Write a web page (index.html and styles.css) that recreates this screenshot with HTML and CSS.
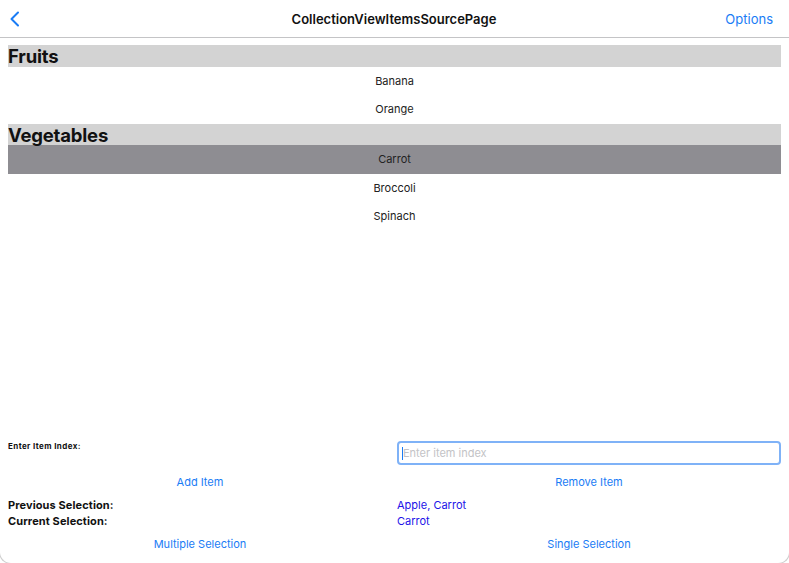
FILE: index.html
```html
<!DOCTYPE html>
<html>
<head>
<meta charset="utf-8">
<link rel="stylesheet" href="styles.css">
</head>
<body>
<div class="app">
  <header class="nav">
    <div class="nav-left">
      <svg class="back" width="12" height="16" viewBox="0 0 12 16"><path d="M9 1.5 L2.5 8 L9 14.5" fill="none" stroke="#1a7cf5" stroke-width="2" stroke-linecap="round" stroke-linejoin="round"/></svg>
    </div>
    <div class="nav-title">CollectionViewItemsSourcePage</div>
    <div class="nav-right">Options</div>
  </header>
  <main class="list">
    <div class="group-header">Fruits</div>
    <div class="item">Banana</div>
    <div class="item">Orange</div>
    <div class="group-header">Vegetables</div>
    <div class="item selected">Carrot</div>
    <div class="item">Broccoli</div>
    <div class="item">Spinach</div>
  </main>
  <section class="panel">
    <div class="label-small">Enter Item Index:</div>
    <div class="entry"><span class="caret"></span><span class="placeholder">Enter item index</span></div>
    <div class="btn btn-row">Add Item</div>
    <div class="btn btn-row">Remove Item</div>
    <div class="label">Previous Selection:</div>
    <div class="value">Apple, Carrot</div>
    <div class="label">Current Selection:</div>
    <div class="value">Carrot</div>
    <div class="btn">Multiple Selection</div>
    <div class="btn">Single Selection</div>
  </section>
  <div class="corner corner-l"></div>
  <div class="corner corner-r"></div>
</div>
</body>
</html>
```
FILE: styles.css
```css
* { box-sizing: border-box; }
html, body { margin: 0; padding: 0; background: #fff; }
body { font-family: Inter, "Noto Sans", "Liberation Sans", sans-serif; color: #1c1c1e; }
.app {
  position: relative;
  width: 789px;
  height: 563px;
  display: flex;
  flex-direction: column;
  overflow: hidden;
}
.nav {
  height: 38px;
  flex: none;
  display: grid;
  grid-template-columns: 1fr auto 1fr;
  align-items: center;
  border-bottom: 1px solid #c4c4c6;
  padding: 0 16px 0 9px;
}
.nav-left { display: flex; align-items: center; }
.back { display: block; }
.nav-title { font-size: 13px; font-weight: 600; color: #111; letter-spacing: 0; padding-left: 6px; }
.nav-right { justify-self: end; font-size: 13px; color: #1a7cf5; }
.list {
  flex: 1;
  padding: 7px 8px 0 8px;
}
.group-header {
  background: #d3d3d3;
  height: 21.5px;
  font-size: 18.5px;
  font-weight: 700;
  line-height: 22px;
  color: #111;
  letter-spacing: -0.2px;
}
.item {
  height: 28.5px;
  display: flex;
  align-items: center;
  justify-content: center;
  font-size: 11px;
  color: #222;
}
.item.selected { background: #8e8d92; }
.panel {
  flex: none;
  display: grid;
  grid-template-columns: 384px 384px;
  column-gap: 5px;
  grid-template-rows: 24px 32px 16px 16px 30px;
  padding: 0 8px 4px 8px;
  align-items: center;
}
.label-small {
  align-self: start;
  font-size: 8px;
  font-weight: 700;
  letter-spacing: 0.4px;
  padding-top: 0;
  color: #111;
}
.entry {
  height: 24px;
  border: 2px solid #7fb2f7;
  border-radius: 4px;
  display: flex;
  align-items: center;
  padding-left: 3px;
  gap: 0;
}
.caret { width: 1px; height: 13px; background: #1a7cf5; }
.placeholder { font-size: 11px; color: #c3c3c6; }
.btn { text-align: center; font-size: 11px; color: #1a7cf5; }
.btn-row { padding-top: 2px; }
.label { font-size: 11px; font-weight: 700; color: #111; letter-spacing: 0.1px; }
.value { font-size: 11px; color: #2213e8; }
.corner {
  position: absolute;
  bottom: -1px;
  width: 14px;
  height: 14px;
  border-bottom: 1px solid #cfcfcf;
}
.corner-l { left: -1px; border-left: 1px solid #cfcfcf; border-bottom-left-radius: 12px; }
.corner-r { right: -1px; border-right: 1px solid #cfcfcf; border-bottom-right-radius: 12px; }
```
